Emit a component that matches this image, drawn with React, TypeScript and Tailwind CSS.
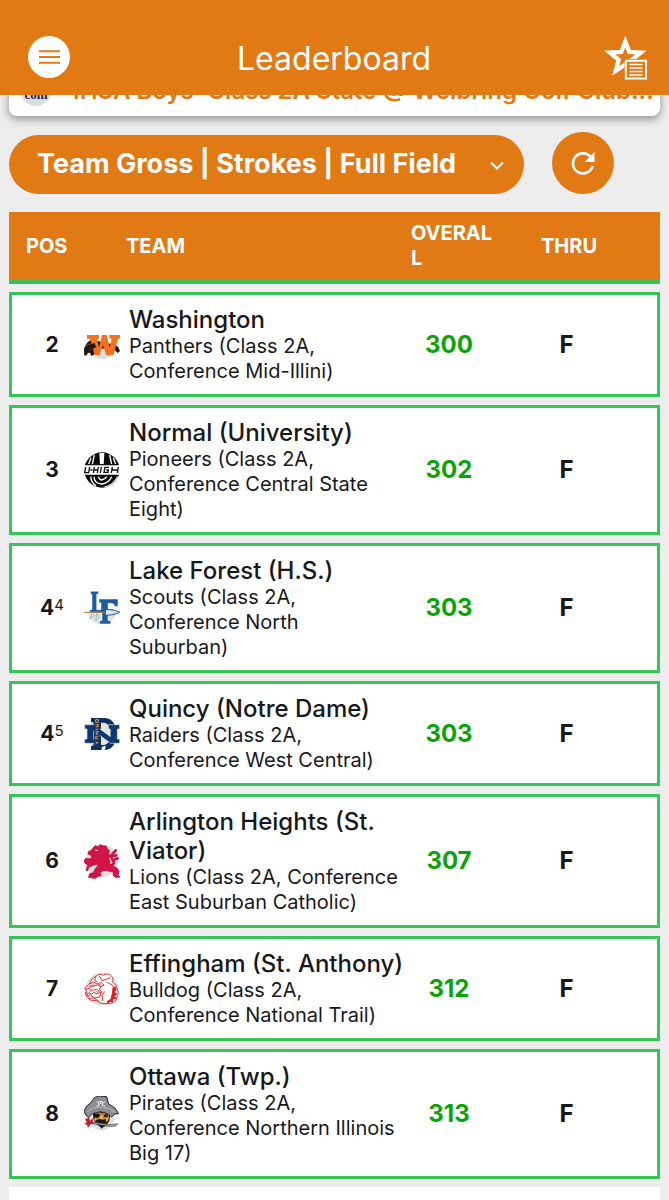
import type { ReactNode } from 'react';

const Backdrop = () => <circle cx="81" cy="75" r="49" fill="#dedfe2" />;

function Logo({ label, children }: { label: string; children: ReactNode }) {
  return (
    <svg role="img" aria-label={label} viewBox="27 21 108 108" className="size-9 shrink-0">
      {children}
    </svg>
  );
}

const panthers = (
  <Logo label="Washington logo">
    <path d="M36 78h91a46 46 0 0 1-91 0z" fill="#dedfe2" />
    <path d="M27 88l9-18 8-7 14-2 28 8 24 4 18 7 6 13-6 5-8-9-12 4 6 8-10 0-9-14-18-4-10 6-13-1 4 14-9 5-2-8-8-2-5 9-6-1z" fill="#20150f" stroke="#20150f" strokeWidth="2" />
    <path d="M33 80l8-8 6 1M43 92l7-6" stroke="#b66a2c" strokeWidth="2" fill="none" />
    <path d="M36 45h36v11h-6l6 26 9-37h14l9 37 6-26h-7V45h33v11h-7l-14 50H94L84 76l-10 30H60L45 56h-9z" fill="#f3701d" />
    <path d="M44 76l14-7 6 12-12 6z" fill="#20150f" />
  </Logo>
);

const pioneers = (
  <Logo label="University High logo">
    <circle cx="81" cy="75" r="53" fill="#0b0b0b" />
    <path d="M48 38l-7 20M58 30l-6 28M104 30l6 28M115 38l7 20" stroke="#fff" strokeWidth="4" />
    <path d="M73 24h15l-2 36H75z" fill="#fff" />
    <path d="M26 59h110v32H26z" fill="#fff" />
    <path d="M31 59h100M31 91h100" stroke="#0b0b0b" strokeWidth="4" />
    <path d="M32 66l-3 17h12l3-17M46 75h6M58 66l-3 18M70 66l-3 18M57 75h12M79 66l-3 18M102 67H90l-3 15h12l1-7h-6M112 66l-3 18M130 66l-3 18M111 75h17" stroke="#0b0b0b" strokeWidth="4" fill="none" />
    <path d="M47 95c1 12 7 22 16 27M57 95c0 12 7 20 22 22 16-2 26-10 31-22M70 95c2 6 5 9 10 10 8-2 13-6 15-10" stroke="#fff" strokeWidth="4" fill="none" />
    <path d="M86 125c18-3 32-14 40-31l4 0c-6 22-22 34-44 33z" fill="#d6d6d6" />
  </Logo>
);

const scouts = (
  <Logo label="Lake Forest logo">
    <path d="M36 84h90c-6 26-24 40-45 40S42 110 36 84z" fill="#e2e2e0" />
    <path d="M47 25h23v9h-5v46h13V59h-6V48h57v22h-10c-1-6-4-9-11-9h-9v17h15v9H99v26h8v10H74v-10h7V88H44v-8h7V34h-4z" fill="#175d9f" stroke="#f7f7f2" strokeWidth="1.5" />
    <path d="M27 88h68" stroke="#a3854b" strokeWidth="3" />
    <path d="M91 79c15 0 30 2 43 9-13 6-27 9-43 9z" fill="#d7e0e8" stroke="#24578d" strokeWidth="3" />
    <path d="M52 92l-8 16 14-10zM66 92l-4 20 10-10z" fill="#f4f3ee" stroke="#6fa3cb" strokeWidth="2" />
  </Logo>
);

const raiders = (
  <Logo label="Quincy Notre Dame logo">
    <circle cx="83" cy="76" r="47" fill="#e4e4e4" />
    <path d="M48 27h42c24 2 34 22 34 48s-10 46-34 48H48v-13h7V40h-7zM78 41v67h8c14-1 20-13 20-33s-6-33-20-34z" fill="#0b2f60" fillRule="evenodd" />
    <path d="M29 47h29l48 36V60h-6V47h34v13h-7v30h7v13h-27L56 66v24h7v13H29V90h7V60h-7z" fill="#0e386e" stroke="#dfe4ec" strokeWidth="2" />
    <path d="M58 29h16v88H58z" fill="#18345d" />
    <path d="M62 32h8v8h-8zM62 47h8v6h-8M62 61h8M62 68h8l-8 7h8M70 82h-8v7h8M62 97l4 4h4M62 106l4-5" stroke="#c8a361" strokeWidth="3" fill="none" />
    <path d="M80 114l12-4-2 12-10 3z" fill="#fff" />
  </Logo>
);

const lions = (
  <Logo label="St. Viator logo">
    <Backdrop />
    <path d="M60 29l9 3 6-6 9 4 9 0 4 8 6 6-2 8 5 7-5 8 4 10-2 11 10 2 13 6 6 10-3 10 6 7-14 1-7-7 2-8-11-3-12-3-12 2-6 6 4 8-10 2-8 6-20-3 3-11 11-3 6-12 7-8 1-6-12 2-11 1-13-3-7-9 7-8 9 2 9-4-3-7-9-5 1-6 8-3z" fill="#ce1544" stroke="#ce1544" strokeWidth="3" strokeLinejoin="round" />
    <path d="M98 88c15 2 22-6 17-13-7-8-9-13-4-20 4-5 8-6 11-12M112 60l12-2M115 72l13-5" fill="none" stroke="#ce1544" strokeWidth="8" strokeLinecap="round" />
    <path d="M57 84l-17 7-4 10" fill="none" stroke="#ce1544" strokeWidth="8" strokeLinecap="round" />
    <path d="M61 42l7 2" stroke="#fff" strokeWidth="3" />
  </Logo>
);

const bulldog = (
  <Logo label="St. Anthony bulldog logo">
    <Backdrop />
    <path d="M29 72l14-12 8-15 13-9 8-5 13 2 8-3 12 1 9 11-1 12 11 12 6 19-7 24-16 10-26 0-16-9-20-2-10-9-4-12 4-5z" fill="#fff" stroke="#dc343a" strokeWidth="3" />
    <path d="M73 36l8 14 26-9M43 60l13-6 10 6 13-4 9 8-12 3-10-4-14 5-9 1M31 76l11-3 9 6 13-3 10 7M34 82l5 15 8-3 12 8 15-3 5-15-13 6-8-5-9 6-6-5-8 5M62 40l-3 9 8 5M81 65l-8 10 7 10M42 103l14-1 15 9M90 82l-9 11 2 18M95 55l17 8 7 13-5 9 5 10" fill="none" stroke="#dc343a" strokeWidth="3" />
    <path d="M44 63l13-2 5 5-7 4-15 1zM65 57l11 2 3 5-10-1z" fill="#e77a7d" />
    <path d="M112 72l9-5 4 11-6 5 8 7-8 6 6 8-9 1-4 11-7-3-8 8-1-9 11-8 4-17z" fill="#d6202b" />
    <path d="M43 76l4 7 4-5M63 80l5 6 4-7M43 95l3-7 4 8" fill="#fff" stroke="#b42830" strokeWidth="2" />
  </Logo>
);

const pirates = (
  <Logo label="Ottawa Pirates logo">
    <path d="M37 85h84c-6 25-21 39-41 39S43 110 37 85z" fill="#dedfe2" />
    <path d="M30 90l12-4 3 9 10-8-2 12 10 5-16 2-8 10-3-9-9-2 8-5z" fill="#c51f31" />
    <path d="M53 65h54l-4 31-10 15-13 6-16-11-9-17z" fill="#282019" />
    <path d="M58 70l14-2 8 5 13-5 11 5-4 17-12 6-8-7-10 9-8-7z" fill="#b9873f" />
    <path d="M53 74h20l2 7-8 6-9-4M86 78l13-3-2 9-9-1M64 94l11-5 7 4 13-3-8 12H70z" fill="#171412" />
    <path d="M75 79l7 0 3 12-11 0zM94 89l7-4-2 10-7 4zM59 86l5 3-1 7-5-4z" fill="#ecb459" />
    <path d="M27 66l8-15 13-10 10-15 13-5 24 2 6 22 18 11 12 18-11 1-10 9-13-10-20-6-24 6-12 12-9-8z" fill="#8b8d91" stroke="#242427" strokeWidth="3" />
    <path d="M37 68l15-10 27-5 25 7 16 10" fill="none" stroke="#b6b7b9" strokeWidth="3" />
    <circle cx="77" cy="42" r="7" fill="#eeeeef" />
    <path d="M65 38l25 14M90 38L64 52" stroke="#eeeeef" strokeWidth="3" />
    <path d="M73 41h2M79 41h2M75 46h4" stroke="#222" strokeWidth="3" />
    <path d="M55 100l50 7 24-3-8 8-18 0-47-7z" fill="#a7a7a9" stroke="#49494b" strokeWidth="2" />
    <path d="M75 109l5 11 6-11" fill="#211a16" />
  </Logo>
);

type Team = { pos: string; sup?: string; name: string; detail: string; score: number; logo: ReactNode };

const teams: Team[] = [
  { pos: '2', name: 'Washington', detail: 'Panthers (Class 2A, Conference Mid-Illini)', score: 300, logo: panthers },
  { pos: '3', name: 'Normal (University)', detail: 'Pioneers (Class 2A, Conference Central State Eight)', score: 302, logo: pioneers },
  { pos: '4', sup: '4', name: 'Lake Forest (H.S.)', detail: 'Scouts (Class 2A, Conference North Suburban)', score: 303, logo: scouts },
  { pos: '4', sup: '5', name: 'Quincy (Notre Dame)', detail: 'Raiders (Class 2A, Conference West Central)', score: 303, logo: raiders },
  { pos: '6', name: 'Arlington Heights (St. Viator)', detail: 'Lions (Class 2A, Conference East Suburban Catholic)', score: 307, logo: lions },
  { pos: '7', name: 'Effingham (St. Anthony)', detail: 'Bulldog (Class 2A, Conference National Trail)', score: 312, logo: bulldog },
  { pos: '8', name: 'Ottawa (Twp.)', detail: 'Pirates (Class 2A, Conference Northern Illinois Big 17)', score: 313, logo: pirates },
];

export default function App() {
  return (
    <div className="min-h-screen overflow-x-hidden bg-[#ededed] font-['Inter',sans-serif] text-[#17181c]">
      <header className="relative z-10 flex h-[95px] items-end justify-between bg-[#e17914] px-[22px] pb-[15px] pl-7 text-white">
        <button aria-label="Menu" className="mb-0.5 flex size-[42px] items-center justify-center rounded-full bg-white text-[#e17914]">
          <svg viewBox="0 0 21 14" className="h-3.5 w-[21px]" stroke="currentColor" strokeWidth="2">
            <path d="M0 1.2h21M0 7h21M0 12.8h21" />
          </svg>
        </button>
        <h1 className="flex-1 pr-1.5 text-center text-[32px] leading-[42px]">Leaderboard</h1>
        <button aria-label="Favorites list">
          <svg viewBox="0 0 43 44" className="h-11 w-[43px]">
            <path d="M21.3 5.5l4 10.4 11.6.7-9 7.2 3 11-9.6-6.2-9.7 6.3 3.1-11.1-9-7.2 11.6-.7z" fill="none" stroke="#fff" strokeWidth="4.2" />
            <path d="M20.5 23h23v21h-23z" fill="#e17914" />
            <path d="M21.8 24.8h20.2v17.8H21.8z" fill="none" stroke="#fff" strokeWidth="2" />
            <path d="M25.5 28.5h13M25.5 32h13M25.5 35.5h13M25.5 39h13" stroke="#fff" strokeWidth="1.6" />
          </svg>
        </button>
      </header>

      <main className="px-[9px]">
        <section className="-mt-10 flex h-[61px] items-start gap-5 rounded-b-lg bg-white pt-[18px] pr-1 pl-2.5 shadow-[0_3px_8px_rgba(0,0,0,0.4)]">
          <svg role="img" aria-label="Tournament logo" viewBox="0 0 34 34" className="size-[34px] shrink-0">
            <circle cx="17" cy="17" r="16" fill="#dcdde0" />
            <text x="17" y="26" textAnchor="middle" className="fill-[#1b2055] font-['Liberation_Serif',serif] text-[13px] font-black">com</text>
          </svg>
          <h2 className="min-w-0 flex-1 truncate text-2xl leading-9 font-semibold text-[#e17914]">
            IHSA Boys&apos; Class 2A State @ Weibring Golf Club...
          </h2>
        </section>

        <div className="mt-4 flex items-end gap-7 pr-[46px]">
          <div className="relative flex-1">
            <select
              aria-label="Leaderboard view"
              className="block h-[59px] w-full appearance-none rounded-full bg-[#e17914] pl-7 text-[27px] font-bold text-white"
            >
              <option>Team Gross | Strokes | Full Field</option>
            </select>
            <svg viewBox="0 0 14 9" className="pointer-events-none absolute top-[26px] right-5 h-[9px] w-3.5" fill="none" stroke="#fff" strokeWidth="2">
              <path d="M1 1.5l6 6 6-6" />
            </svg>
          </div>
          <button aria-label="Refresh" className="flex size-[62px] items-center justify-center rounded-full bg-[#e17914]">
            <svg viewBox="0 0 24 24" className="size-6">
              <path d="M19.8 6.2A10 10 0 1 0 21.6 15" fill="none" stroke="#fff" strokeWidth="2.6" />
              <path d="M23.5 1v10h-10z" fill="#fff" />
            </svg>
          </button>
        </div>

        <table className="mt-[18px] w-full table-fixed border-separate border-spacing-0">
          <colgroup>
            <col className="w-[75px]" />
            <col />
            <col className="w-[88px]" />
            <col className="w-[167px]" />
          </colgroup>
          <thead>
            <tr className="h-[72px] bg-[#e17914] text-left text-xl leading-[25px] text-white">
              <th className="border-b-4 border-[#3dbd5c] pl-[17px] font-bold">POS</th>
              <th className="border-b-4 border-[#3dbd5c] pl-[42px] font-bold">TEAM</th>
              <th className="border-b-4 border-[#3dbd5c] pl-1.5 font-bold break-all">OVERALL</th>
              <th className="border-b-4 border-[#3dbd5c] pl-12 font-bold">THRU</th>
            </tr>
          </thead>
          {teams.map((team) => (
            <tbody key={team.name}>
              <tr aria-hidden="true" className="h-2"><td colSpan={4} /></tr>
              <tr className="bg-white text-center">
                <td className="border-y-[3px] border-l-[3px] border-[#36c558] pl-2 text-[21px] font-bold">
                  {team.pos}
                  {team.sup && <sup className="top-[-5px] text-[15px] font-normal">{team.sup}</sup>}
                </td>
                <td className="border-y-[3px] border-[#36c558] py-2.5 text-left">
                  <div className="flex items-center gap-[9px]">
                    {team.logo}
                    <div className="min-w-0 flex-1">
                      <p className="text-2xl leading-[29px] font-medium">{team.name}</p>
                      <p className="pr-1.5 text-xl leading-[25px]">{team.detail}</p>
                    </div>
                  </div>
                </td>
                <td className="border-y-[3px] border-[#36c558] text-2xl font-bold text-[#08a408]">{team.score}</td>
                <td className="border-y-[3px] border-r-[3px] border-[#36c558] pr-[17px] text-2xl font-bold">F</td>
              </tr>
            </tbody>
          ))}
        </table>
        <div className="mt-2 h-[15px] bg-white" />
      </main>
    </div>
  );
}
